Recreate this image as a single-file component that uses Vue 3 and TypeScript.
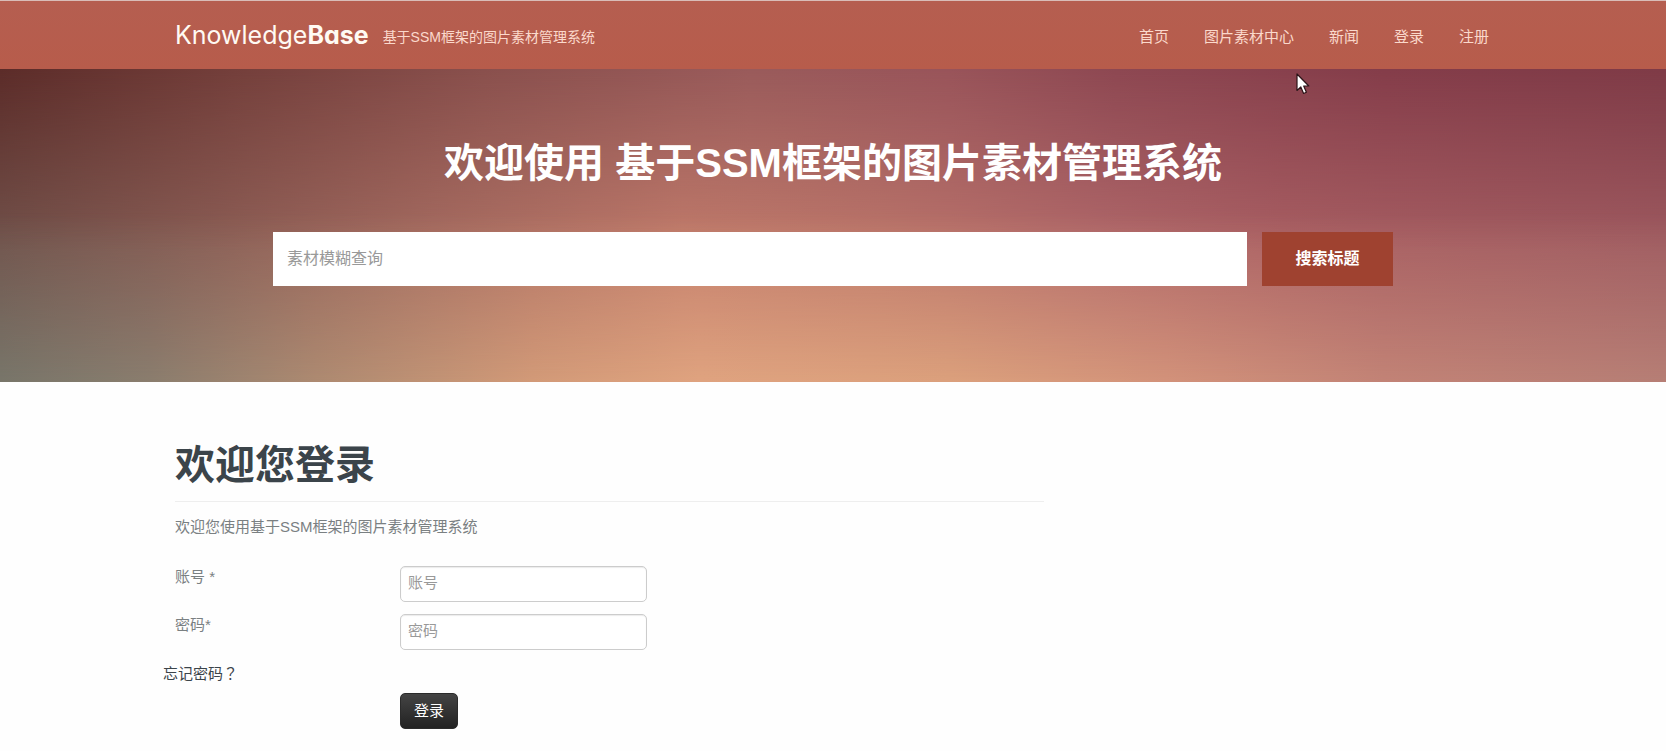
<script setup lang="ts">
import { ref } from 'vue'

interface NavItem {
  label: string
  href: string
}

const siteName = '基于SSM框架的图片素材管理系统'

const navItems: NavItem[] = [
  { label: '首页', href: '#home' },
  { label: '图片素材中心', href: '#gallery' },
  { label: '新闻', href: '#news' },
  { label: '登录', href: '#login' },
  { label: '注册', href: '#register' },
]

const keyword = ref('')
const account = ref('')
const password = ref('')
</script>

<template>
  <div class="page">
    <header class="site-header">
      <div class="container header-inner">
        <a class="brand" href="#home">
          <span class="logo">Knowledge<strong>Base</strong></span>
          <span class="tagline">{{ siteName }}</span>
        </a>
        <nav class="nav">
          <a v-for="item in navItems" :key="item.label" :href="item.href">{{ item.label }}</a>
        </nav>
      </div>
    </header>

    <section class="hero">
      <div class="hero-inner">
        <h1>欢迎使用 {{ siteName }}</h1>
        <form class="search" role="search" @submit.prevent>
          <input v-model="keyword" type="text" placeholder="素材模糊查询" aria-label="素材模糊查询" />
          <button type="submit">搜索标题</button>
        </form>
      </div>
      <svg class="pointer" width="14" height="22" viewBox="0 0 14 22" aria-hidden="true">
        <path
          d="M1 1V17.5L4.8 14L7.6 20.5L10.4 19.3L7.7 13H12.8Z"
          fill="#fff"
          stroke="#2c1418"
          stroke-width="1.2"
          stroke-linejoin="round"
        />
      </svg>
    </section>

    <main class="container content">
      <section class="login">
        <h2>欢迎您登录</h2>
        <p class="intro">欢迎您使用{{ siteName }}</p>
        <form class="login-form" @submit.prevent>
          <label for="account">账号 *</label>
          <input id="account" v-model="account" type="text" placeholder="账号" />
          <label for="password">密码*</label>
          <input id="password" v-model="password" type="password" placeholder="密码" />
          <a class="forgot" href="#forgot">忘记密码<span class="mark">？</span></a>
          <button type="submit">登录</button>
        </form>
      </section>
    </main>
  </div>
</template>

<style>
body {
  background: #fefefe;
}
</style>

<style scoped>
.page,
.page input,
.page button {
  font-family: 'Liberation Sans', 'Noto Sans CJK SC', sans-serif;
}

.page {
  color: #7a8082;
  font-size: 15px;
  line-height: 24px;
}

.page *,
.page *::before,
.page *::after {
  box-sizing: border-box;
}

.page a {
  text-decoration: none;
}

.container {
  width: calc(100% - 48px);
  max-width: 1316px;
  margin: 0 auto;
}

.site-header {
  border-top: 1px solid #d9bdb8;
  background: linear-gradient(#b55e50, #b75c4b);
}

.header-inner {
  display: flex;
  align-items: center;
  justify-content: space-between;
  min-height: 68px;
}

.brand {
  display: flex;
  align-items: center;
  gap: 14px;
  color: #fbd9cc;
}

.logo {
  color: #fffaf3;
  font-family: Inter, 'Liberation Sans', sans-serif;
  font-size: 25px;
  font-weight: 400;
  font-feature-settings: 'cv11';
}

.logo strong {
  font-weight: 700;
}

.tagline {
  padding-top: 4px;
  font-size: 14px;
}

.nav {
  display: flex;
  gap: 35px;
  padding: 4px 2px 0 0;
}

.nav a {
  color: #fbd9cc;
}

.hero {
  position: relative;
  background: linear-gradient(
    90deg,
    #5c2c29 0%,
    #743f3b 14%,
    #8a504d 29%,
    #9a5b5b 45%,
    #99545a 57%,
    #8e4852 67%,
    #853d4a 83%,
    #7f3b47 100%
  );
}

.hero::before,
.hero::after {
  content: '';
  position: absolute;
  inset: 0;
}

.hero::before {
  background: linear-gradient(
    90deg,
    #72524b 0%,
    #8b5d55 13%,
    #a66c61 26%,
    #c17b6b 41%,
    #bb756a 53%,
    #b0686a 66%,
    #a95f63 77%,
    #a35c61 89%,
    #9e5a60 100%
  );
  mask-image: linear-gradient(transparent, #000 58%);
}

.hero::after {
  background: linear-gradient(
    90deg,
    #78766a 0%,
    #8a7d6e 9%,
    #ad8a71 19%,
    #d29a78 32%,
    #dfa37f 42%,
    #dba07c 57%,
    #d2927a 70%,
    #c28376 83%,
    #b67e75 100%
  );
  mask-image: linear-gradient(transparent 46%, #000);
}

.hero-inner {
  position: relative;
  z-index: 1;
  width: calc(100% - 48px);
  max-width: 1120px;
  margin: 0 auto;
  padding: 70px 0 96px;
}

.hero h1 {
  margin: 0 0 45px;
  color: #fff;
  font-size: 40px;
  line-height: 48px;
  text-align: center;
}

.search {
  display: flex;
  gap: 15px;
}

.search input,
.search button {
  height: 54px;
  border: 0;
  border-radius: 0;
  font-size: 16px;
}

.search input {
  flex: 1;
  min-width: 0;
  padding: 0 14px;
  background: #fff;
  color: #555;
}

.search button {
  width: 131px;
  padding: 0 0 4px;
  background: #9f4230;
  color: #fff;
  font-weight: 700;
}

.pointer {
  position: absolute;
  z-index: 2;
  top: 4px;
  left: 77.8%;
}

.content {
  padding: 59px 0 22px;
}

.login {
  width: 66%;
}

.login h2 {
  margin: 0 0 13px;
  padding-bottom: 12px;
  border-bottom: 1px solid #eeeeee;
  color: #3b444a;
  font-size: 40px;
  line-height: 48px;
}

.intro {
  margin: 0 0 27px;
}

.login-form {
  display: grid;
  grid-template-columns: 225px 247px;
  row-gap: 12px;
  line-height: 22px;
}

.login-form input {
  height: 36px;
  padding: 0 7px 4px;
  border: 1px solid #ccc;
  border-radius: 5px;
  background: #fff;
  box-shadow: inset 0 1px 1px rgba(0, 0, 0, 0.08);
  color: #555;
  font-size: 15px;
}

.page input::placeholder {
  color: #999;
  opacity: 1;
}

.forgot {
  grid-column: 1 / -1;
  justify-self: start;
  margin-left: -12px;
  color: #3b444a;
}

.mark {
  font-family: 'Noto Sans CJK TC', sans-serif;
}

.login-form button {
  grid-column: 2;
  justify-self: start;
  height: 36px;
  margin-top: -4px;
  padding: 0 13px 4px;
  border: 1px solid #2b2b2b;
  border-radius: 5px;
  background: linear-gradient(#444, #222);
  color: #fff;
  font-size: 15px;
}
</style>
